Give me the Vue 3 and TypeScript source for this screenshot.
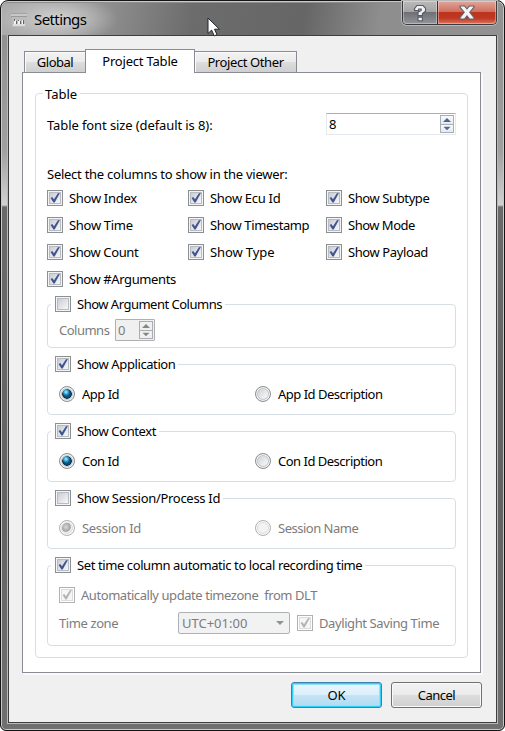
<script setup lang="ts">
import { reactive, ref, h, type FunctionalComponent } from 'vue'

interface Item { label: string; track: string }
interface Column extends Item { checked: boolean }
interface Choice extends Item { checked: boolean; options: Item[] }

const tabs = [
  { label: 'Global', cls: 'tab-global k5' },
  { label: 'Project Table', cls: 'tab-table k2' },
  { label: 'Project Other', cls: 'tab-other k4' },
]
const activeTab = ref('Project Table')

const columns = reactive<Column[]>([
  { label: 'Show Index', checked: true, track: 'k3' },
  { label: 'Show Ecu Id', checked: true, track: 'k3' },
  { label: 'Show Subtype', checked: true, track: 'k4' },
  { label: 'Show Time', checked: true, track: 'k3' },
  { label: 'Show Timestamp', checked: true, track: 'k4' },
  { label: 'Show Mode', checked: true, track: 'k5' },
  { label: 'Show Count', checked: true, track: 'k4' },
  { label: 'Show Type', checked: true, track: 'k1' },
  { label: 'Show Payload', checked: true, track: 'k4' },
  { label: 'Show #Arguments', checked: true, track: 'k4' },
])

const choices = reactive<Choice[]>([
  {
    label: 'Show Application', track: 'k4', checked: true,
    options: [{ label: 'App Id', track: 'k5' }, { label: 'App Id Description', track: 'k5' }],
  },
  {
    label: 'Show Context', track: 'k4', checked: true,
    options: [{ label: 'Con Id', track: 'k5' }, { label: 'Con Id Description', track: 'k5' }],
  },
  {
    label: 'Show Session/Process Id', track: 'k3', checked: false,
    options: [{ label: 'Session Id', track: 'k3' }, { label: 'Session Name', track: 'k5' }],
  },
])

const CheckMark: FunctionalComponent = () =>
  h('svg', { viewBox: '0 0 12 12', width: 12, height: 12 }, [
    h('path', { d: 'M1.6 6 L3.2 4.9 L5 7.2 L8.9 1.3 L10.9 0.9 L5.7 10.4 L4.4 10.4 Z', fill: 'currentColor' }),
  ])
</script>

<template>
  <div class="window">
    <header class="titlebar">
      <svg class="app-icon" width="16" height="16" viewBox="0 0 16 16">
        <rect x="1" y="4" width="14" height="11" fill="#bcbcbc" />
        <rect x="0" y="1" width="16" height="4" fill="#c8c8c8" />
        <rect x="0" y="1" width="16" height="1" fill="#a2a2a2" />
        <rect x="0" y="4" width="16" height="1" fill="#9a9a9a" />
        <rect x="2" y="12" width="12" height="2" fill="#dedede" />
        <path d="M3 8h2v4h-2zM7 8h2v4h-2zM11 8h2v4h-2z" fill="#f2f2f2" />
        <path d="M3 7h1v2h-1zM5 9h1v3h-1zM7 8h1v1h-1zM9 9h1v3h-1zM12 8h1v4h-1z" fill="#666" />
      </svg>
      <h1>Settings</h1>
      <div class="controls">
        <button class="help" aria-label="Help">
          <svg width="14" height="18" viewBox="0 0 14 18">
            <path d="M1.5 6.6V4.6L4 1.5h6l2.5 2.6v3.2L9.4 9.6v2H5V8.4l3.2-2V5H5.6v1.6Z" fill="#f2f2f2" stroke="#565a68" stroke-width="1.1" />
            <path d="M5 13.2h4.4v3.6H5Z" fill="#f2f2f2" stroke="#565a68" stroke-width="1.1" />
          </svg>
        </button>
        <button class="close" aria-label="Close">
          <svg width="16" height="15" viewBox="0 0 16 15">
            <path d="M1 1h4.5L8 4 10.5 1H15v1.2L10.8 7.2 15 12.6V14h-4.5L8 10.8 5.5 14H1v-1.4L5.2 7.2 1 2.2Z" fill="#f4f4f4" stroke="#62616b" stroke-width="1.1" />
          </svg>
        </button>
      </div>
      <svg class="cursor" width="14" height="20" viewBox="0 0 14 20">
        <path d="M1 1v15.5l3.6-3.4 2.7 5.8 2.7-1.2-2.5-5.5h4.9Z" fill="#fff" stroke="#20242e" stroke-width="1" />
      </svg>
    </header>

    <main class="client">
      <nav class="tabs">
        <button v-for="t in tabs" :key="t.label" class="tab" :class="[t.cls, { active: t.label === activeTab }]" @click="activeTab = t.label">{{ t.label }}</button>
      </nav>

      <div class="page">
        <section class="group outer">
          <div class="legend plain">Table</div>
          <div class="font-row">
            <span class="font-label k1">Table font size (default is 8):</span>
            <div class="spin wide">
              <span>8</span>
              <div class="arrows">
                <svg viewBox="0 0 12 8"><path d="M6 2 10 6H2Z" /></svg>
                <svg viewBox="0 0 12 8"><path d="M6 6 10 2H2Z" /></svg>
              </div>
            </div>
          </div>
          <p class="prompt">Select the columns to show in the viewer:</p>
          <div class="columns">
            <div v-for="c in columns" :key="c.label" class="check" @click="c.checked = !c.checked">
              <span class="box"><CheckMark v-if="c.checked" /></span>
              <span :class="c.track">{{ c.label }}</span>
            </div>
          </div>

          <section class="group inner args">
            <div class="legend"><span class="box"></span><span class="k5">Show Argument Columns</span></div>
            <div class="row disabled">
              <span class="cols-label k5">Columns</span>
              <div class="spin small">
                <span>0</span>
                <div class="arrows">
                  <svg viewBox="0 0 12 8"><path d="M6 2 10 6H2Z" /></svg>
                  <svg viewBox="0 0 12 8"><path d="M6 6 10 2H2Z" /></svg>
                </div>
              </div>
            </div>
          </section>

          <section v-for="g in choices" :key="g.label" class="group inner choice">
            <div class="legend">
              <span class="box"><CheckMark v-if="g.checked" /></span><span :class="g.track">{{ g.label }}</span>
            </div>
            <div class="radios" :class="{ disabled: !g.checked }">
              <div v-for="(o, i) in g.options" :key="o.label" class="radio">
                <span class="dot" :class="{ on: i === 0 }"></span><span :class="o.track">{{ o.label }}</span>
              </div>
            </div>
          </section>

          <section class="group inner time">
            <div class="legend">
              <span class="box"><CheckMark /></span><span class="k4">Set time column automatic to local recording time</span>
            </div>
            <div class="check auto disabled"><span class="box"><CheckMark /></span><span class="auto-label">Automatically update timezone&nbsp; from DLT</span></div>
            <div class="zone disabled">
              <span class="zone-label k4">Time zone</span>
              <div class="combo"><span>UTC+01:00</span><i></i></div>
              <div class="check"><span class="box"><CheckMark /></span><span class="k4">Daylight Saving Time</span></div>
            </div>
          </section>
        </section>
      </div>

      <footer class="actions">
        <button class="btn default">OK</button>
        <button class="btn k5">Cancel</button>
      </footer>
    </main>
  </div>
</template>

<style>
body { background: #fff; overflow: hidden; }
</style>

<style scoped>
* { box-sizing: border-box; }
.window {
  width: 505px; height: 731px; position: relative;
  display: flex; flex-direction: column;
  padding: 2px 7px 7px;
  border: 1px solid #141414; border-radius: 8px 8px 6px 6px;
  box-shadow: inset 0 0 0 1px #c9c9c9;
  background: linear-gradient(180deg, #8d8d8d 0, #979797 80px, #a0a0a0 150px, #d2d2d2 204px, #6a6a6a 206px, #626262 500px, #707070 100%);
  font: 13px/16px "Noto Sans", "DejaVu Sans", sans-serif;
  color: #000;
}
button { font: inherit; color: inherit; padding: 0; margin: 0; }
.k1 { letter-spacing: -.1px; }
.k2 { letter-spacing: -.2px; }
.k3 { letter-spacing: -.3px; }
.k4 { letter-spacing: -.4px; }
.k5 { letter-spacing: -.5px; }

.titlebar {
  position: relative; height: 32px; flex: none; margin: 0 -6px; padding: 0 6px 0 9px;
  display: flex; align-items: center;
  border-radius: 6px 6px 0 0;
  background:
    radial-gradient(ellipse 60px 24px at 56px 16px, rgba(225,225,225,.8), rgba(200,200,200,0) 100%),
    linear-gradient(100deg, #adadad 0, #979797 85px, #6c6c6c 190px, #666 300px, #8e8e8e 375px, #929292 100%);
}
.app-icon { margin-top: 1px; }
h1 { margin: -1px 0 0 7px; font-size: 15px; line-height: 20px; font-weight: 400; letter-spacing: -.6px; }
.controls { margin-left: auto; align-self: flex-start; margin-top: -2px; display: flex; height: 24px; border: 1px solid #3b3b3f; border-top: 0; border-radius: 0 0 5px 5px; box-shadow: 0 0 0 1px #b8b8b8; }
.controls button { border: 0; display: flex; align-items: center; justify-content: center; height: 23px; box-shadow: inset 0 0 0 1px rgba(255,255,255,.35); }
.help { width: 34px; background: linear-gradient(#bababa 0, #a3a3a3 48%, #6f7073 50%, #92959b 100%); border-radius: 0 0 0 4px; }
.controls .close { width: 59px; border-left: 1px solid #4d2722; background: linear-gradient(#e0a79c 0, #d0705f 46%, #bd341d 50%, #bf3822 75%, #dc7660 100%); border-radius: 0 0 4px 0; }
.cursor { position: absolute; left: 205px; top: 14px; }

.client { flex: 1; background: #f0f0f0; border: 1px solid #3e3e3e; box-shadow: 0 0 0 1px #b9b9b9; padding: 13px 15px 0 13px; }
.tabs { display: flex; align-items: flex-end; height: 23px; padding-left: 2px; }
.tab { height: 21px; border: 1px solid #898c95; border-bottom: 0; background: linear-gradient(#f2f2f2 0, #ebebeb 48%, #dddddd 52%, #cfcfcf 100%); box-shadow: inset 1px 1px #fbfbfb; line-height: 21px; }
.tab-global { width: 62px; }
.tab-table { width: 110px; }
.tab-other { width: 102px; border-left: 0; }
.tab.active { height: 24px; background: #fff; position: relative; margin: 0 0 -1px -1px; box-shadow: none; line-height: 23px; }
.page { height: 601px; border: 1px solid #898c95; background: #fff; box-shadow: 1px 1px #fafafa, 2px 2px #fafafa; padding: 20px 12px 0 12px; }

.group { border: 1px solid #d5dfe5; border-radius: 4px; }
.outer { height: 565px; padding: 0 11px; }
.legend { display: flex; align-items: center; width: max-content; background: #fff; height: 16px; margin: -9px 0 0 3px; padding: 0 3px 0 4px; gap: 6px; }
.legend.plain { margin: -8px 0 0 -4px; padding: 0 3px 0 2px; }
.font-row { display: flex; align-items: center; justify-content: space-between; height: 22px; margin-top: 11px; }
.font-label { padding-top: 2px; }
.prompt { margin: 31px 0 0; height: 17px; line-height: 17px; letter-spacing: -.26px; }
.columns { display: grid; grid-template-columns: 141px 138px 1fr; grid-auto-rows: 16px; row-gap: 11px; margin-top: 7px; }
.check, .radio { display: flex; align-items: center; gap: 6px; white-space: nowrap; }
.box { width: 16px; height: 16px; flex: none; border: 1px solid #8e8f8f; box-shadow: inset 0 0 0 1px #f4f4f4, inset 0 0 0 2px #b7bcc4; background: linear-gradient(135deg, #c6cad3 10%, #f7f7f7 85%); display: flex; align-items: center; justify-content: center; color: #40558f; }
.disabled { color: #7c7c7c; }
.disabled .box { color: #b4b4b4; border-color: #b1b1b1; box-shadow: inset 0 0 0 1px #fff, inset 0 0 0 2px #dcdcdc; background: #f6f6f6; }
.args { height: 44px; margin-top: 17px; }
.row { display: flex; align-items: center; padding-left: 11px; margin-top: 7px; height: 22px; }
.cols-label { width: 56px; }
.spin { display: flex; justify-content: space-between; align-items: center; height: 22px; border: 1px solid #e3e9ef; border-top-color: #abadb3; background: #fff; padding: 0 1px 0 2px; }
.wide { width: 130px; }
.small { width: 40px; background: #f0f0f0; border-color: #b0b0b0; border-radius: 1px; }
.arrows { width: 14px; height: 18px; border: 1px solid #a9adb5; display: flex; flex-direction: column; }
.arrows svg { width: 12px; height: 8px; background: linear-gradient(#fafafa, #e9e9e9); fill: #4a63a8; display: block; }
.arrows svg + svg { border-top: 1px solid #a9adb5; height: 8px; }
.small .arrows svg { fill: #868686; background: #f0f0f0; }
.choice { height: 51px; margin-top: 16px; }
.radios { display: grid; grid-template-columns: 196px 1fr; padding-left: 11px; margin-top: 14px; }
.radio { gap: 7px; height: 16px; }
.dot { width: 16px; height: 16px; border-radius: 50%; border: 1px solid #8e8f8f; box-shadow: inset 0 0 0 1px #f6f6f6, inset 0 0 0 2px #c3c7cd; background: linear-gradient(135deg, #cfd2d8 15%, #f8f8f8 80%); }
.dot.on { background: radial-gradient(circle at 6px 5px, rgba(190,240,255,1) 0, rgba(60,180,225,.9) 2px, rgba(60,180,225,0) 4px), radial-gradient(circle at 7px 7px, #0f6b9f 0, #0b4a75 3.5px, #10273f 4.6px, #e6e9ec 5.2px); }
.disabled .dot { border-color: #b1b1b1; box-shadow: inset 0 0 0 1px #fff, inset 0 0 0 2px #dcdcdc; background: #f3f3f3; }
.disabled .dot.on { background: radial-gradient(circle at 6px 6px, #d8d8d8 0, #b5b5b5 3px, #a2a2a2 4.4px, #f0f0f0 5.2px); }
.time { height: 81px; margin-top: 16px; }
.auto { margin: 14px 0 0 11px; }
.auto-label { letter-spacing: -.44px; }
.zone { display: flex; align-items: center; padding-left: 11px; margin-top: 9px; height: 22px; }
.zone-label { width: 119px; }
.combo { width: 112px; height: 22px; border: 1px solid #adb2b5; border-radius: 2px; background: #f2f2f2; display: flex; align-items: center; justify-content: space-between; padding: 0 5px 0 3px; margin-right: 7px; }
.combo i { border: 4px solid transparent; border-top-color: #929292; border-bottom: 0; }

.actions { display: flex; justify-content: flex-end; gap: 9px; margin: 9px -1px 0 0; }
.btn { width: 91px; height: 26px; border: 1px solid #707070; border-radius: 3px; box-shadow: inset 0 0 0 1px #fafafa; background: linear-gradient(#f2f2f2 0, #ebebeb 48%, #dddddd 50%, #cfcfcf 100%); line-height: 23px; }
.btn.default { border-color: #3c7fb1; box-shadow: inset 0 0 0 1px #2fd0f8, inset 0 0 0 2px #8ce3fa; background: linear-gradient(#eaf6fd 0, #dceffa 48%, #c6e4f5 50%, #aedcf2 100%); }
</style>
